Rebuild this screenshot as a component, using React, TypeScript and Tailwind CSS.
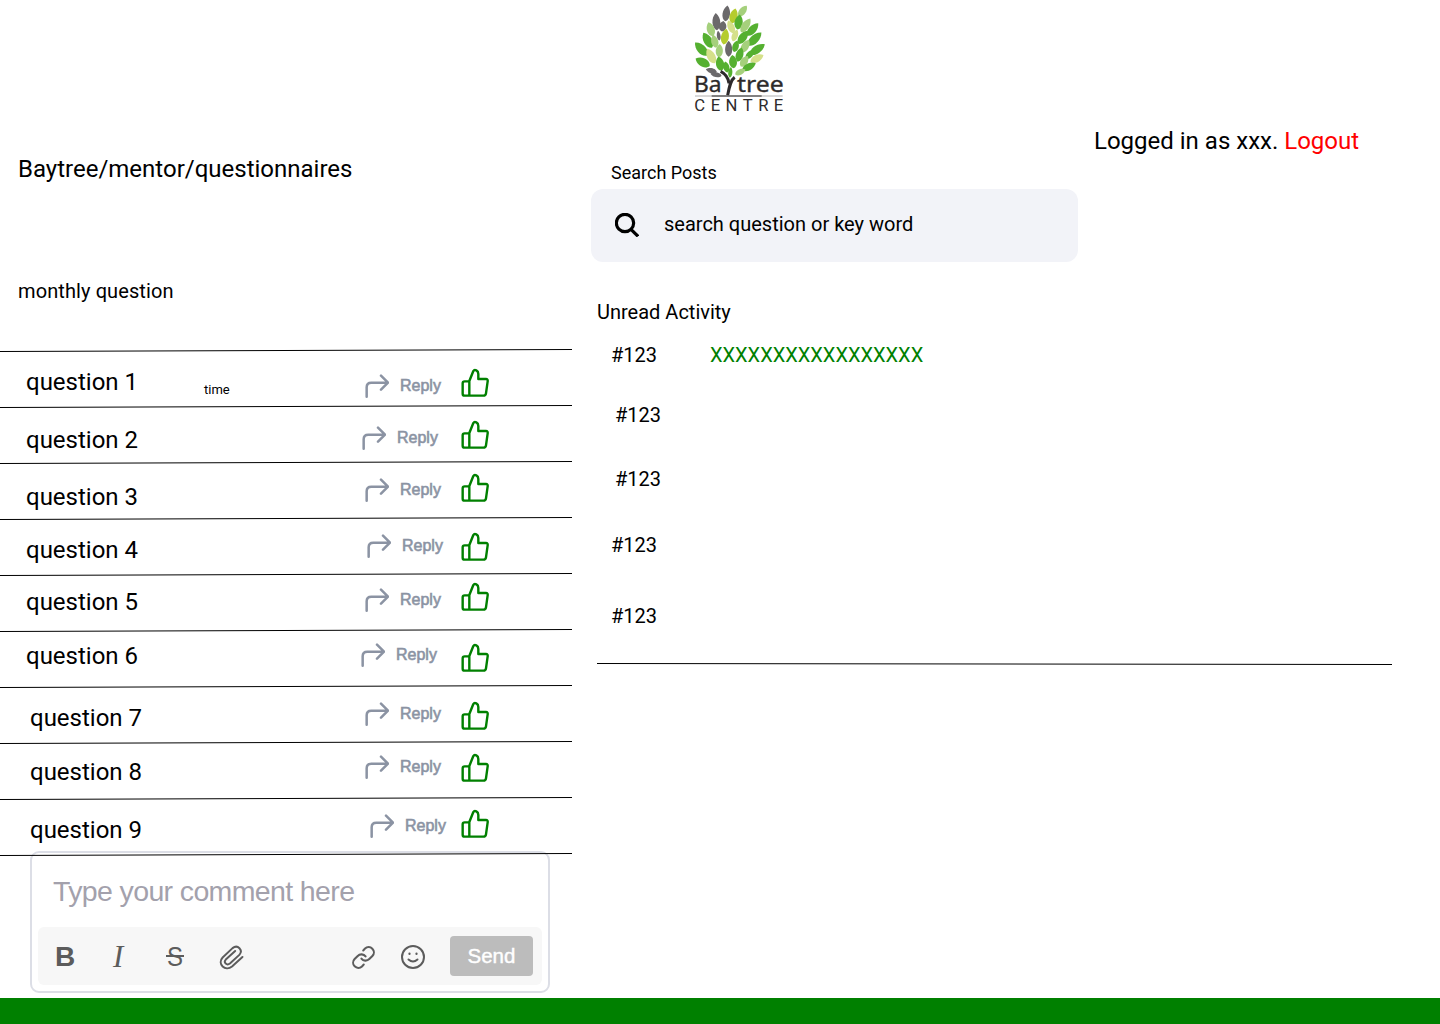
import React from "react";

type Question = {
  label: string;
  x: number;
  y: number;
  replyX: number;
  replyY: number;
  likeY: number;
  time?: string;
};

const ROW_HEIGHT = 56;
const LIST_TOP = 350;

const questions: Question[] = [
  { label: "question 1", x: 26, y: 382, replyX: 365, replyY: 385, likeY: 368, time: "time" },
  { label: "question 2", x: 26, y: 440, replyX: 362, replyY: 437, likeY: 420 },
  { label: "question 3", x: 26, y: 497, replyX: 365, replyY: 489, likeY: 473 },
  { label: "question 4", x: 26, y: 550, replyX: 367, replyY: 545, likeY: 532 },
  { label: "question 5", x: 26, y: 602, replyX: 365, replyY: 599, likeY: 582 },
  { label: "question 6", x: 26, y: 656, replyX: 361, replyY: 654, likeY: 643 },
  { label: "question 7", x: 30, y: 718, replyX: 365, replyY: 713, likeY: 701 },
  { label: "question 8", x: 30, y: 772, replyX: 365, replyY: 766, likeY: 753 },
  { label: "question 9", x: 30, y: 830, replyX: 370, replyY: 825, likeY: 809 },
];

const activity = [
  { id: "#123", indent: 20, height: 60, text: "XXXXXXXXXXXXXXXXX" },
  { id: "#123", indent: 24, height: 64, text: "" },
  { id: "#123", indent: 24, height: 66, text: "" },
  { id: "#123", indent: 20, height: 71, text: "" },
  { id: "#123", indent: 20, height: 59, text: "" },
];

const DARK = "#6b696b";
const GREEN = "#55b030";
const LIGHT = "#a5d07c";
const LIME = "#b5cc2e";
const PALE = "#d5e08a";

// centre x, centre y, rotation, length, width, colour
const leaves: [number, number, number, number, number, string][] = [
  [139, 40, 8, 48, 20, DARK],
  [109, 65, -4, 52, 21, DARK],
  [128, 79, 8, 32, 20, DARK],
  [161, 48, 14, 46, 21, LIME],
  [188, 33, 38, 40, 18, LIGHT],
  [153, 81, -24, 42, 18, PALE],
  [176, 66, 8, 46, 22, GREEN],
  [197, 76, 34, 50, 20, LIGHT],
  [92, 88, -18, 44, 21, LIGHT],
  [116, 107, -8, 30, 10, DARK],
  [135, 110, 10, 48, 21, LIME],
  [165, 106, 20, 38, 16, PALE],
  [218, 88, 42, 50, 20, GREEN],
  [83, 121, -30, 52, 23, GREEN],
  [104, 124, -14, 40, 19, LIGHT],
  [189, 112, 36, 48, 21, GREEN],
  [224, 117, 46, 56, 22, GREEN],
  [64, 147, -44, 54, 23, GREEN],
  [118, 152, 4, 40, 19, LIGHT],
  [146, 146, 0, 48, 19, DARK],
  [167, 139, 16, 36, 17, GREEN],
  [196, 138, 30, 44, 20, LIGHT],
  [232, 148, 56, 54, 21, GREEN],
  [93, 168, -28, 50, 22, PALE],
  [179, 164, 16, 44, 20, GREEN],
  [210, 163, 44, 36, 16, GREEN],
  [231, 175, 62, 44, 19, PALE],
  [68, 187, -62, 48, 23, GREEN],
  [120, 191, -12, 44, 22, GREEN],
  [159, 185, -6, 40, 21, GREEN],
  [139, 201, -12, 34, 16, GREEN],
  [193, 184, 34, 38, 19, LIGHT],
  [207, 200, 62, 46, 19, GREEN],
  [181, 216, 64, 34, 15, LIGHT],
  [151, 217, 6, 32, 11, GREEN],
  [94, 212, -76, 34, 14, DARK],
  [108, 224, -80, 34, 13, DARK],
];

function Logo() {
  return (
    <svg className="h-[120px] w-[120px]" viewBox="0 0 360 360" role="img" aria-label="Baytree Centre">
      {leaves.map(([x, y, r, len, w, fill], i) => (
        <path
          key={i}
          transform={`translate(${x} ${y}) rotate(${r})`}
          d={`M0 ${-len / 2} C${w * 0.78} ${-len * 0.22} ${w * 0.72} ${len * 0.36} 0 ${len / 2} C${-w * 0.72} ${len * 0.36} ${-w * 0.78} ${-len * 0.22} 0 ${-len / 2}Z`}
          fill={fill}
        />
      ))}
      <path d="M122 214 C137 222 145 232 147 250 M164 232 C153 240 149 254 143 286" fill="none" stroke="#2d2a2b" strokeWidth="9" />
      <g fill="#2d2a2b" fontFamily="Noto Sans">
        <text x="42" y="277" fontSize="66" stroke="#2d2a2b" strokeWidth="1" textLength="83" lengthAdjust="spacingAndGlyphs">Ba</text>
        <text x="171" y="277" fontSize="66" stroke="#2d2a2b" strokeWidth="1" textLength="140" lengthAdjust="spacingAndGlyphs">tree</text>
        <text x="43" y="332" fontSize="50" fontWeight="400" fontFamily="Roboto" textLength="267" lengthAdjust="spacing">CENTRE</text>
      </g>
      <path d="M45 288 H308" stroke="#8a8889" strokeWidth="2" />
      <path d="M95 288 H245" stroke="#2d2a2b" strokeWidth="3" />
    </svg>
  );
}

function ReplyIcon() {
  return (
    <svg className="h-[25px] w-[24px] shrink-0" viewBox="45 100 72 75" fill="none" stroke="#8b93a3" strokeWidth="7.5" strokeLinecap="round" strokeLinejoin="round">
      <path d="M50 168V140Q50 126 64 126H111M93 105L114 126L93 147" />
    </svg>
  );
}

function LikeIcon() {
  return (
    <svg className="h-[29.33px] w-[28.67px]" viewBox="333 84 86 88" fill="none" stroke="#008000" strokeWidth="7.2" strokeLinejoin="round">
      <path d="M358 123L370 93Q373 88 379 91Q385 94 385 102V117H408Q414 117 413 124L408 160Q407 167 400 167H344Q338 167 338 161V130Q338 124 344 124H358V167" />
    </svg>
  );
}

function Rule({ low }: { low?: boolean }) {
  return (
    <svg className={low ? "absolute left-0 top-[2px] h-[4px] w-[572px]" : "absolute left-0 top-[-1px] h-[4px] w-[572px]"} viewBox="0 0 572 4" stroke="#000">
      <path d="M0 2.5L572 0.5" />
    </svg>
  );
}

function QuestionRow({ q, top }: { q: Question; top: number }) {
  return (
    <li className="relative flex h-14 items-start">
      <Rule />
      <span className="w-0 whitespace-nowrap text-2xl leading-7" style={{ marginLeft: q.x, marginTop: q.y - 14 - top }}>
        {q.label}
      </span>
      {q.time && <span className="ml-[178px] mt-8 w-0 text-[13px] leading-4">{q.time}</span>}
      <button
        className="flex w-0 items-start gap-[11px]"
        style={{ marginLeft: q.replyX - q.x - (q.time ? 178 : 0), marginTop: q.replyY - 11.5 - top }}
      >
        <ReplyIcon />
        <span className="mt-[3px] font-['Liberation_Sans'] text-base leading-[18px] text-[#8b93a3] [-webkit-text-stroke:0.6px_#8b93a3]">Reply</span>
      </button>
      <button className="w-7" style={{ marginLeft: 461 - q.replyX, marginTop: q.likeY - top }} aria-label="Like">
        <LikeIcon />
      </button>
    </li>
  );
}

function CommentBox() {
  return (
    <div className="ml-[30px] mt-[-3px] flex h-[142px] w-[520px] flex-col rounded-[9px] border-2 border-[#dcdee6] px-1.5 pb-1.5">
      <div className="ml-[15px] mt-[21px] h-[53px] whitespace-nowrap font-['Liberation_Sans'] text-[28.5px] leading-[34px] tracking-[-0.63px] text-[#a3a1ac]">
        Type your comment here
      </div>
      <div className="flex h-[58px] items-center rounded-md bg-[#f7f7f7] pt-[2px] text-[#5c5c5c]">
        <span className="ml-[17px] w-[58px] font-['Liberation_Sans'] text-[28px] font-bold leading-[30px]">B</span>
        <span className="w-[53px] font-['Liberation_Serif'] text-[31px] italic leading-[30px]">I</span>
        <svg className="mr-[36px] h-9 w-[18px]" viewBox="0 -6 18 36" fill="currentColor">
          <text x="9" y="21" textAnchor="middle" fontFamily="Liberation Sans" fontSize="27" textLength="16" lengthAdjust="spacingAndGlyphs">S</text>
          <path d="M0 10H18V12H0Z" />
        </svg>
        <svg className="ml-[-1px] mr-px h-[25px] w-[25px]" viewBox="0 0 24 24" fill="none" stroke="currentColor" strokeWidth="1.9" strokeLinecap="round" strokeLinejoin="round">
          <path d="M22.500 11.500L12.500 20.700C6 26-2 18 3.500 12L13 3C18-1 23.500 5 19.500 9.500L10.500 17.800C7.500 20 4 17 6.500 14L15.500 5.700" />
        </svg>
        <svg className="ml-[106px] h-[25px] w-[25px]" viewBox="0 0 24 24" fill="none" stroke="currentColor" strokeWidth="2" strokeLinecap="round" strokeLinejoin="round">
          <path d="M10 13a5 5 0 0 0 7.540.540l3-3a5 5 0 0 0-7.070-7.070l-1.720 1.710M14 11a5 5 0 0 0-7.540-.540l-3 3a5 5 0 0 0 7.070 7.070l1.710-1.710" />
        </svg>
        <svg className="ml-6 h-[26px] w-[26px]" viewBox="0 0 26 26" fill="none" stroke="currentColor" strokeWidth="2" strokeLinecap="round">
          <circle cx="13" cy="13" r="11" />
          <path d="M8.500 15.500Q13 19.500 17.500 15.500" />
          <path d="M9.500 9.500V10M16.500 9.500V10" strokeWidth="2.200" />
        </svg>
        <button className="ml-[24px] mt-[-2px] h-10 w-[83px] rounded bg-[#bcbcbc] font-['Liberation_Sans'] text-[20.5px] text-white [-webkit-text-stroke:0.4px_#fff]">
          Send
        </button>
      </div>
    </div>
  );
}

export default function App() {
  return (
    <div className="flex h-[1024px] w-[1440px] flex-col overflow-hidden bg-white font-[Roboto,sans-serif] text-black">
      <header className="h-[120px] pl-[680px]">
        <Logo />
      </header>
      <main className="flex h-[878px]">
        <section className="w-[572px]">
          <h1 className="ml-[18px] mt-[35px] text-2xl leading-7">Baytree/mentor/questionnaires</h1>
          <h2 className="ml-[18px] mt-24 h-[71px] text-xl leading-6 tracking-[0.1px]">monthly question</h2>
          <ul>
            {questions.map((q, i) => (
              <QuestionRow key={q.label} q={q} top={LIST_TOP + i * ROW_HEIGHT} />
            ))}
          </ul>
          <div className="relative">
            <CommentBox />
            <Rule low />
          </div>
        </section>
        <section className="w-[868px] pl-[19px]">
          <div className="flex h-[142px] items-start">
            <div className="w-[487px] pt-[42px]">
              <label className="ml-5 block h-[27px] text-lg leading-[22px]">Search Posts</label>
              <div className="flex h-[73px] items-center rounded-xl bg-[#f2f3f8]">
                <svg className="ml-6 mt-[-2px] h-6 w-6" viewBox="105 188 72 72" fill="none" stroke="#000" strokeWidth="9.5">
                  <circle cx="135" cy="218" r="26" />
                  <path d="M153 237L174 258" />
                </svg>
                <span className="ml-[25px] mt-[-3px] text-xl">search question or key word</span>
              </div>
            </div>
            <p className="ml-4 mt-[7px] whitespace-nowrap text-2xl leading-7">
              Logged in as xxx. <a className="text-[#ff0000]">Logout</a>
            </p>
          </div>
          <h2 className="ml-[6px] mt-[38px] h-[43px] text-xl leading-6">Unread Activity</h2>
          <ul>
            {activity.map((a, i) => (
              <li key={i} className="flex text-xl leading-6" style={{ height: a.height, paddingLeft: a.indent }}>
                <span className="w-[99px]">{a.id}</span>
                <span className="text-[#008000]">{a.text}</span>
              </li>
            ))}
          </ul>
          <svg className="ml-[6px] h-[4px] w-[795px]" viewBox="0 0 795 4" stroke="#000">
            <path d="M0 0.500L795 1.500" />
          </svg>
        </section>
      </main>
      <footer className="h-[26px] bg-[#008000]" />
    </div>
  );
}
